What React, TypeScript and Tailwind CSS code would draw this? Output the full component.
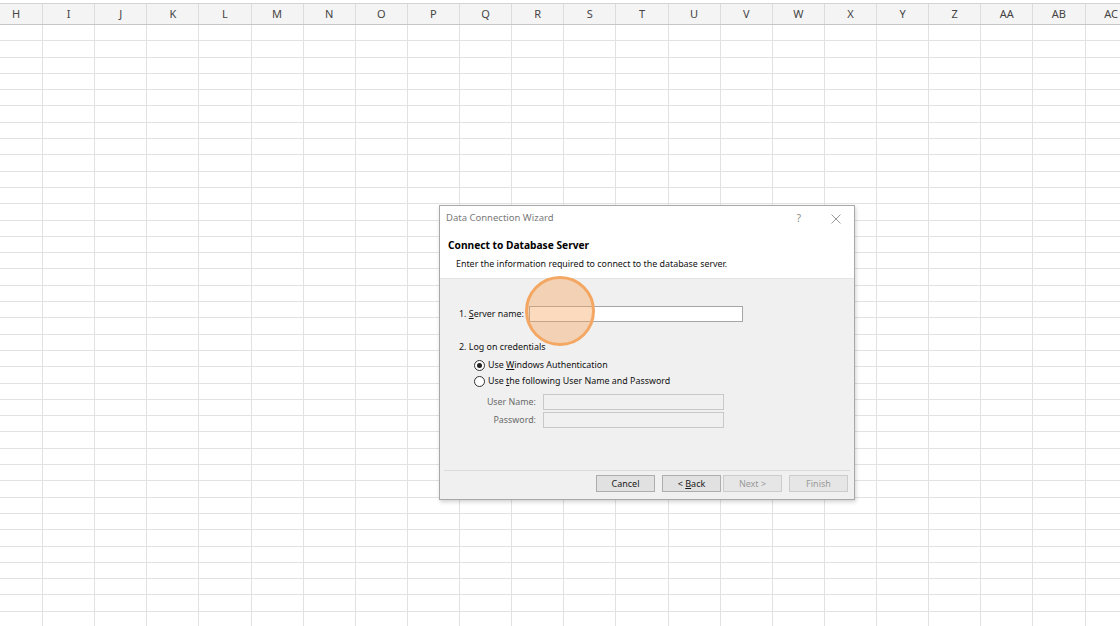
const columns = ["H", "I", "J", "K", "L", "M", "N", "O", "P", "Q", "R", "S", "T", "U", "V", "W", "X", "Y", "Z", "AA", "AB", "AC"];
const rows = Array.from({ length: 38 }, (_, i) => i);

function Sheet() {
  return (
    <div className="h-[626px] w-[1120px] overflow-hidden bg-white">
      <div className="h-[3px] bg-white" />
      <div className="flex h-[22px] w-max border-y border-t-[#d4d4d4] border-b-[#c6c6c6] bg-[#f4f4f4]">
        {columns.map((c, i) => (
          <div
            key={c}
            className={`flex h-full shrink-0 items-center justify-center border-r border-[#dcdcdc] text-[11px] text-[#444] ${
              i === 0 ? "w-[43px]" : "w-[52.125px]"
            }`}
          >
            <span className={i === 0 ? "ml-[-10px]" : ""}>{c}</span>
          </div>
        ))}
      </div>
      {rows.map((r) => (
        <div key={r} className="flex h-[16.3px] w-max border-b border-[#e2e2e2]">
          {columns.map((c, i) => (
            <div
              key={c}
              className={`h-full shrink-0 border-r border-[#e2e2e2] ${i === 0 ? "w-[43px]" : "w-[52.125px]"}`}
            />
          ))}
        </div>
      ))}
    </div>
  );
}

function Button({ label, disabled }: { label: React.ReactNode; disabled?: boolean }) {
  return (
    <div
      className={`flex h-[17px] w-[59px] items-center justify-center border text-[9px] ${
        disabled ? "border-[#cccccc] bg-[#e6e6e6] text-[#9a9a9a]" : "border-[#adadad] bg-[#e1e1e1] text-[#1a1a1a]"
      }`}
    >
      {label}
    </div>
  );
}

function Wizard() {
  return (
    <div className="absolute left-[439px] top-[205px] flex h-[295px] w-[416px] flex-col border border-[#a8a8a8] bg-[#f0f0f0] shadow-[1px_2px_4px_rgba(0,0,0,0.18)]">
      <div className="h-[72px] bg-white">
        <div className="flex h-[24px] items-center justify-between pl-[6px] pr-[13px] pt-[1px]">
          <span className="text-[9.5px] text-[#7a7a7a]">Data Connection Wizard</span>
          <div className="flex items-center gap-[30px] text-[#8f8f8f]">
            <span className="text-[10.5px]">?</span>
            <svg width="10" height="10" viewBox="0 0 10 10" fill="none" stroke="currentColor" strokeWidth="0.9">
              <path d="M0.5 0.5L9.5 9.5M9.5 0.5L0.5 9.5" />
            </svg>
          </div>
        </div>
        <div className="mt-[8px] pl-[8px] text-[10.2px] font-bold leading-[14px] text-black">Connect to Database Server</div>
        <div className="mt-[6px] pl-[16px] text-[8.9px] leading-[12px] text-[#111]">
          Enter the information required to connect to the database server.
        </div>
      </div>
      <div className="flex flex-1 flex-col border-t border-[#e4e4e4] text-[8.9px] text-[#111]">
        <div className="mt-[27px] flex h-[16px] items-center pl-[19px]">
          <span className="w-[70px]">
            1. <span className="underline">S</span>erver name:
          </span>
          <div className="h-[16px] w-[214px] border border-[#a6a6a6] bg-white" />
        </div>
        <div className="mt-[19px] h-[12px] pl-[19px] leading-[12px]">2. Log on credentials</div>
        <div className="mt-[5px] flex h-[14px] items-center gap-[3px] pl-[34px]">
          <span className="flex size-[11px] items-center justify-center rounded-full border border-[#333] bg-white">
            <span className="size-[5px] rounded-full bg-[#222]" />
          </span>
          <span>
            Use <span className="underline">W</span>indows Authentication
          </span>
        </div>
        <div className="mt-[2px] flex h-[14px] items-center gap-[3px] pl-[34px]">
          <span className="size-[11px] rounded-full border border-[#333] bg-white" />
          <span>
            Use <span className="underline">t</span>he following User Name and Password
          </span>
        </div>
        <div className="mt-[6px] flex h-[16px] items-center">
          <span className="w-[103px] pr-[7px] text-right text-[#6a6a6a]">User Name:</span>
          <div className="h-[16px] w-[181px] border border-[#c8c8c8] bg-[#f0f0f0]" />
        </div>
        <div className="mt-[2px] flex h-[16px] items-center">
          <span className="w-[103px] pr-[7px] text-right text-[#6a6a6a]">Password:</span>
          <div className="h-[16px] w-[181px] border border-[#c8c8c8] bg-[#f0f0f0]" />
        </div>
        <div className="flex-1" />
        <div className="mx-[4px] h-px bg-[#dadada]" />
        <div className="mb-[7px] mt-[4px] flex justify-end pr-[6px]">
          <Button label="Cancel" />
          <div className="ml-[7px]">
            <Button
              label={
                <span>
                  &lt; <span className="underline">B</span>ack
                </span>
              }
            />
          </div>
          <div className="ml-[2px]">
            <Button label="Next >" disabled />
          </div>
          <div className="ml-[7px]">
            <Button label="Finish" disabled />
          </div>
        </div>
      </div>
    </div>
  );
}

export default function App() {
  return (
    <div className="relative h-[626px] w-[1120px] overflow-hidden font-['Noto_Sans',sans-serif]">
      <Sheet />
      <Wizard />
      <div className="absolute left-[525px] top-[276px] size-[70px] rounded-full border-[3px] border-[#f3a763] bg-[#f8a35a]/40" />
    </div>
  );
}
